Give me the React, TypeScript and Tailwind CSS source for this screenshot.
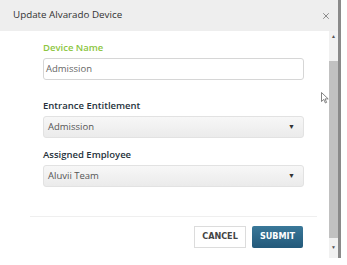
import { X } from "lucide-react";

function Field({ label, green, children }: { label: string; green?: boolean; children: React.ReactNode }) {
  return (
    <div className="flex flex-col gap-[3px]">
      <label className={`text-[9.5px] leading-[14px] font-semibold ${green ? "text-[#8cc63f]" : "text-[#26323c]"}`}>{label}</label>
      {children}
    </div>
  );
}

function Select({ value }: { value: string }) {
  return (
    <div className="h-[22px] flex items-center justify-between pl-[4px] pr-[8px] rounded-[3px] border border-[#e2e2e2] bg-gradient-to-b from-[#f7f7f7] to-[#ebebeb] text-[9.5px] text-[#555]">
      <span>{value}</span>
      <span className="text-[7px] text-[#333]">▼</span>
    </div>
  );
}

export default function App() {
  return (
    <div className="relative w-[347px] h-[265px] bg-white flex font-['Open_Sans',sans-serif]">
      <div className="w-[338px] h-[258px] flex flex-col">
        {/* header */}
        <div className="h-[31px] bg-[#eeeeee] flex items-center justify-between pl-[13px] pr-[7px]">
          <span className="text-[9.8px] text-[#333]">Update Alvarado Device</span>
          <X className="w-[10px] h-[10px] text-[#777]" strokeWidth={2} />
        </div>

        {/* body */}
        <div className="flex-1 flex min-h-0">
          <div className="flex-1 pl-[30px] pr-[12px] pt-[10px]">
            <div className="flex flex-col px-[13px]">
              <Field label="Device Name" green>
                <div className="h-[22px] flex items-center pl-[2px] rounded-[3px] border border-[#d6d6d6] text-[9.5px] text-[#666]">
                  Admission
                </div>
              </Field>
              <div className="mt-[19px]">
                <Field label="Entrance Entitlement">
                  <Select value="Admission" />
                </Field>
              </div>
              <div className="mt-[10px]">
                <Field label="Assigned Employee">
                  <Select value="Aluvii Team" />
                </Field>
              </div>
            </div>
            <div className="mt-[29px] border-t border-[#efefef]" />
            <div className="flex justify-end gap-[6px] pr-[14px] pt-[9px]">
              <button className="w-[52px] h-[22px] border border-[#dcdcdc] bg-white text-[9px] font-bold text-[#444] font-['Liberation_Sans_Narrow','DejaVu_Sans_Condensed',sans-serif]">
                CANCEL
              </button>
              <button className="w-[51px] h-[22px] rounded-[2px] bg-gradient-to-b from-[#3a7899] to-[#23597a] text-[9px] font-bold text-white font-['Liberation_Sans_Narrow','DejaVu_Sans_Condensed',sans-serif]">
                SUBMIT
              </button>
            </div>
          </div>

          {/* scrollbar */}
          <div className="w-[9px] bg-[#f1f1f1] flex flex-col items-center">
            <div className="h-[12px] flex items-center justify-center text-[5px] text-[#555]">▲</div>
            <div className="h-[18px]" />
            <div className="w-[9px] flex-1 bg-[#c1c1c1]" />
            <div className="h-[20px] flex items-center justify-center text-[5px] text-[#555]">▼</div>
          </div>
        </div>
      </div>
      <div className="w-[3px] h-[258px] bg-[#8a8a8a]" />

      {/* mouse pointer */}
      <svg className="absolute left-[321px] top-[92px]" width="8" height="12" viewBox="0 0 8 12">
        <path d="M0.5 0.5 L0.5 9.5 L2.8 7.4 L4.4 11 L5.6 10.4 L4.1 6.9 L7.2 6.9 Z" fill="white" stroke="#666" strokeWidth="0.8" />
      </svg>
    </div>
  );
}
